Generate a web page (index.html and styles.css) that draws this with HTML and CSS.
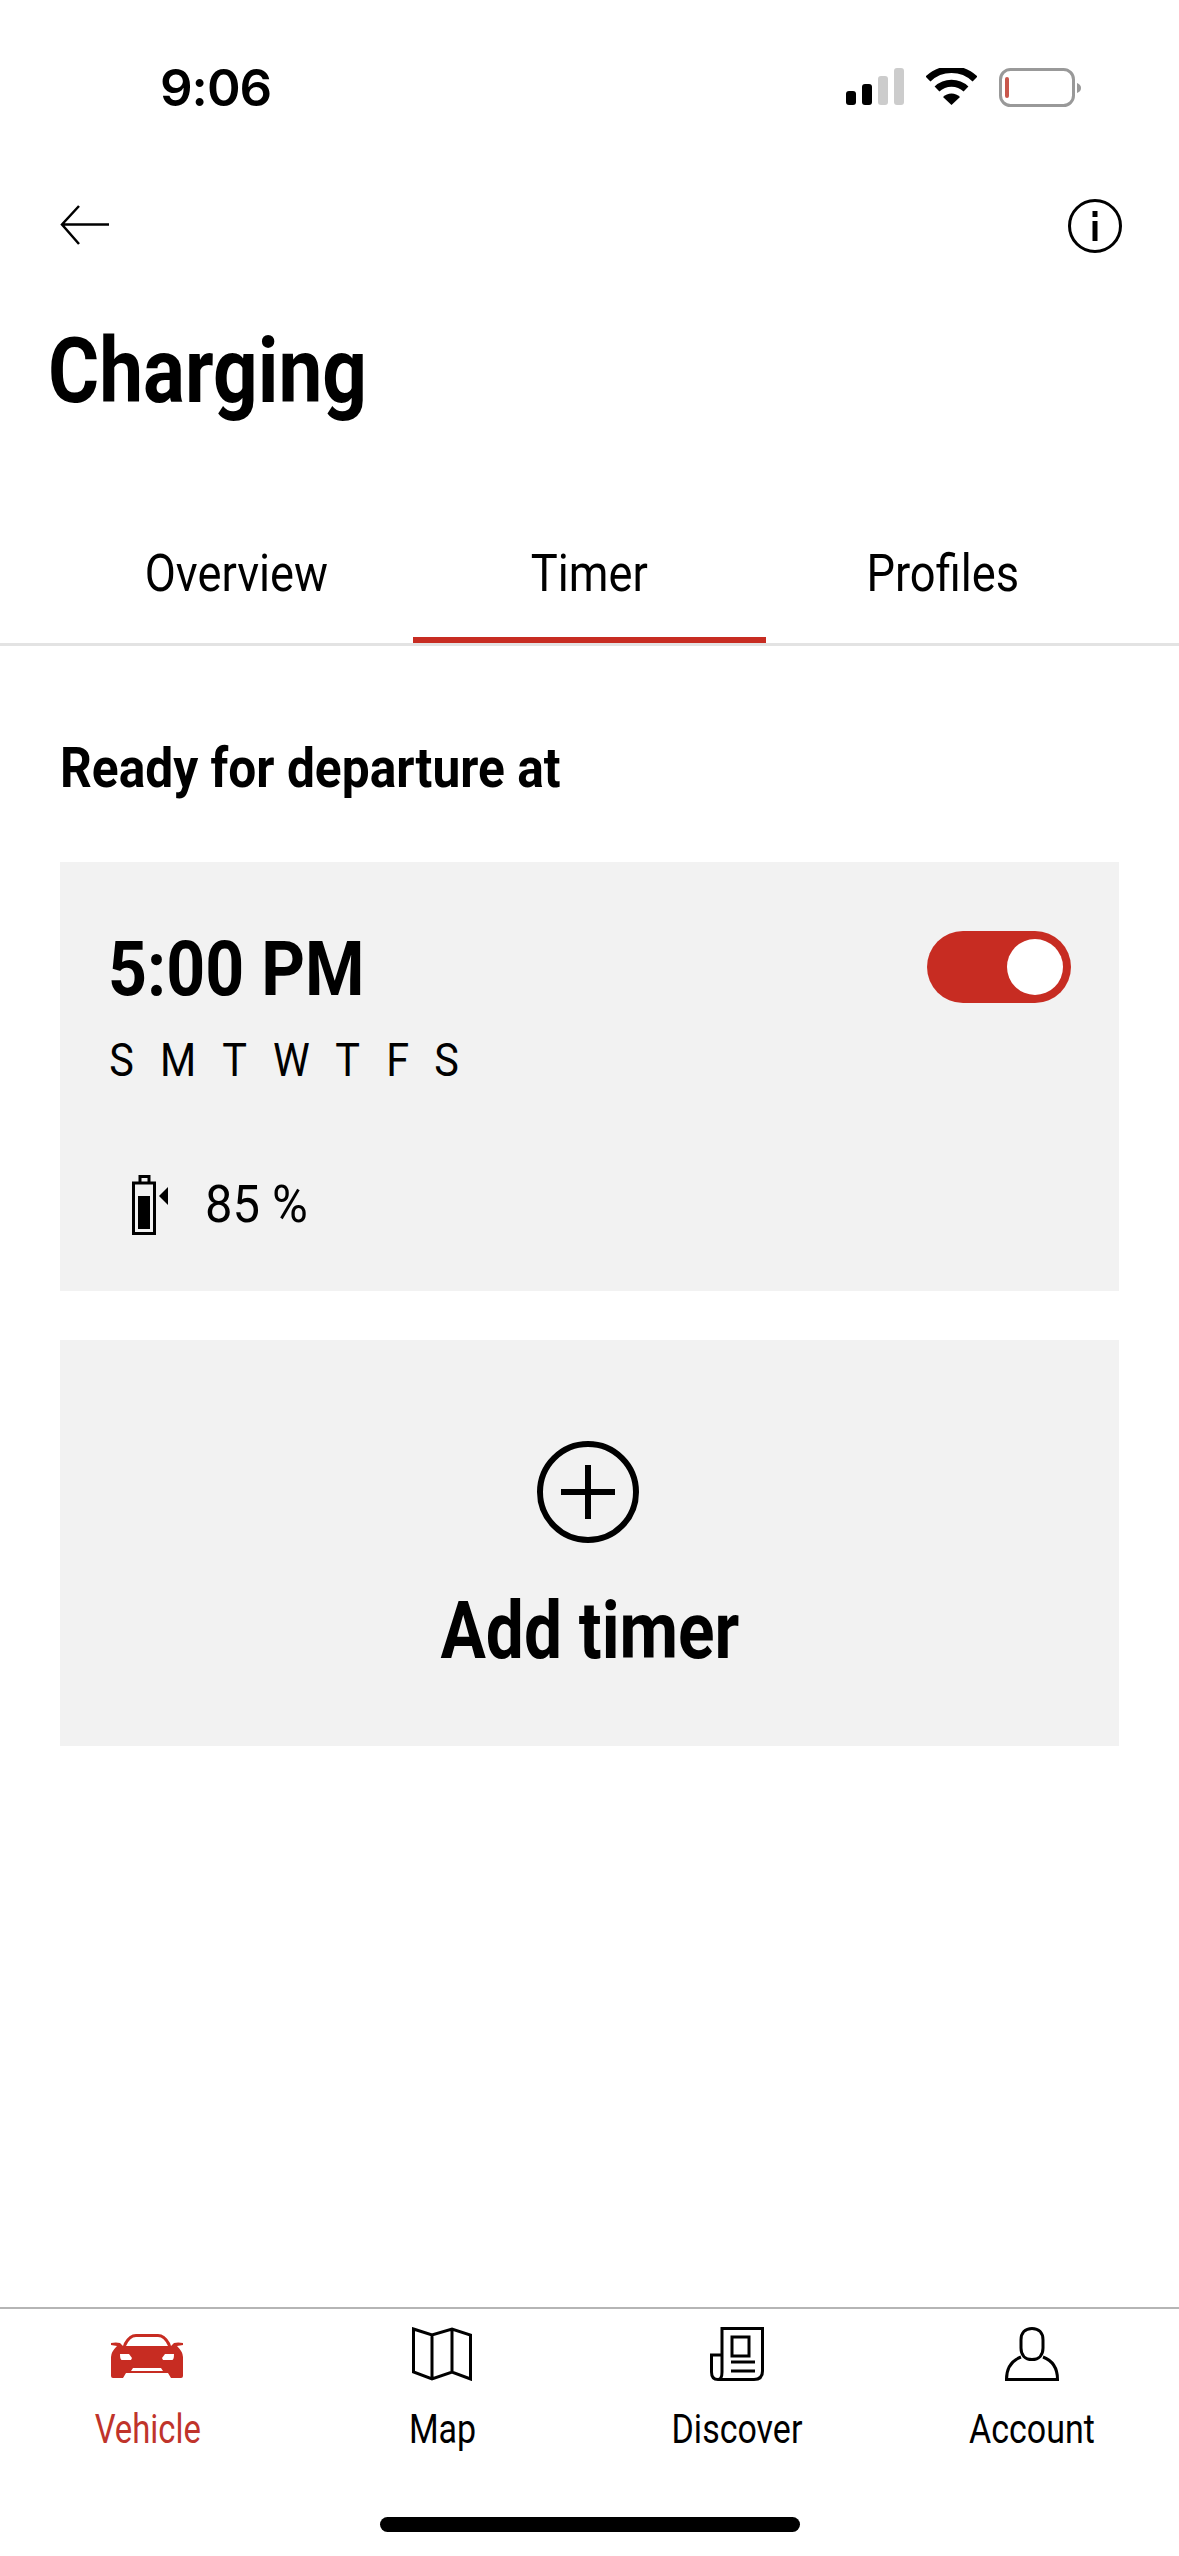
FILE: index.html
```html
<!DOCTYPE html>
<html lang="en">

<head>
    <meta charset="UTF-8">
    <meta name="viewport" content="width=device-width, initial-scale=1.0">
    <title>Charging</title>
    <link rel="stylesheet" href="styles.css">
</head>

<body>
    <div class="page">
        <div class="status-bar">
            <span class="clock">9:06</span>
            <div class="status-icons">
                <svg class="signal" width="58" height="37" viewBox="0 0 58 37">
                    <rect x="0" y="23" width="10" height="14" rx="3" fill="#000"/>
                    <rect x="16" y="16" width="10" height="21" rx="3" fill="#000"/>
                    <rect x="32" y="8" width="10" height="29" rx="3" fill="#ccc"/>
                    <rect x="48" y="0" width="10" height="37" rx="3" fill="#ccc"/>
                </svg>
                <svg class="wifi" width="51" height="37" viewBox="0 0 51 37">
                    <path d="M2 11 A34 34 0 0 1 49 11" fill="none" stroke="#000" stroke-width="7"/>
                    <path d="M11 21 A21 21 0 0 1 40 21" fill="none" stroke="#000" stroke-width="7"/>
                    <path d="M25.500 37 L17 29 A12 12 0 0 1 34 29 Z" fill="#000"/>
                </svg>
                <svg class="batt" width="82" height="39" viewBox="0 0 82 39">
                    <rect x="1.500" y="1.500" width="73" height="36" rx="10" fill="none" stroke="#999" stroke-width="3"/>
                    <rect x="6" y="9" width="4" height="21" rx="2" fill="#c8574c"/>
                    <path d="M78 15 C81 16 82 18 82 20 C82 22 81 24 78 25 Z" fill="#999"/>
                </svg>
            </div>
        </div>

        <div class="top-bar">
            <svg width="50" height="40" viewBox="0 0 50 40">
                <path d="M49 19.500 H3 M19 1 L2 19.500 L19 39" fill="none" stroke="#000" stroke-width="2.500"/>
            </svg>
            <svg width="54" height="54" viewBox="0 0 54 54">
                <circle cx="27" cy="27" r="25.500" fill="none" stroke="#000" stroke-width="3"/>
                <rect x="24.500" y="12" width="5" height="6" fill="#000"/>
                <rect x="24.500" y="22" width="5" height="20" fill="#000"/>
            </svg>
        </div>

        <h1 class="title"><span class="narrow">Charging</span></h1>

        <div class="tabs">
            <div class="tab"><span class="narrow">Overview</span></div>
            <div class="tab active"><span class="narrow">Timer</span></div>
            <div class="tab"><span class="narrow">Profiles</span></div>
        </div>

        <div class="content">
            <h2 class="section-title"><span class="narrow">Ready for departure at</span></h2>

            <div class="card timer-card">
                <div class="timer-top">
                    <div class="time"><span class="narrow">5:00 PM</span></div>
                    <div class="toggle"><span class="knob"></span></div>
                </div>
                <div class="days">
                    <span class="narrow">S</span><span class="narrow">M</span><span class="narrow">T</span><span class="narrow">W</span><span class="narrow">T</span><span class="narrow">F</span><span class="narrow">S</span>
                </div>
                <div class="target">
                    <svg width="36" height="60" viewBox="0 0 36 60">
                        <path d="M8 8 V1.500 H17 V8" fill="none" stroke="#000" stroke-width="3"/>
                        <rect x="1.500" y="8" width="21" height="50.500" fill="none" stroke="#000" stroke-width="3"/>
                        <rect x="6" y="21" width="12" height="33" fill="#000"/>
                        <path d="M27 21 L36 12 V30 Z" fill="#000"/>
                    </svg>
                    <span class="percent narrow">85 %</span>
                </div>
            </div>

            <div class="card add-card">
                <svg class="plus" width="102" height="102" viewBox="0 0 102 102">
                    <circle cx="51" cy="51" r="48" fill="none" stroke="#000" stroke-width="6"/>
                    <path d="M51 24 V78 M24 51 H78" fill="none" stroke="#000" stroke-width="6"/>
                </svg>
                <div class="add-label"><span class="narrow">Add timer</span></div>
            </div>
        </div>

        <nav class="bottom-nav">
            <div class="nav-item selected">
                <svg width="72" height="54" viewBox="0 -6 72 54">
                    <path fill-rule="evenodd" fill="#c72c22" d="M12 13 L13 10 Q18 1 25 1 H47 Q54 1 59 10 L60 13 L63 10 Q67 9 72 10 V12 L66 13 Q72 19 72 24 V43 Q72 45 70 45 H60 L57 40 H15 L12 45 H2 Q0 45 0 43 V24 Q0 19 6 13 L0 12 V10 Q5 9 9 10 Z M15 13 H57 Q53 4 47 4 H25 Q19 4 15 13 Z M9 21 Q9 27 11 27 H20 L21 25 L18 21 Z M63 21 H54 L51 25 L52 27 H61 Q63 27 63 21 Z M22 35 H50 L52 38 H20 Z"/>
                </svg>
                <span class="nav-label"><span class="narrow">Vehicle</span></span>
            </div>
            <div class="nav-item">
                <svg width="60" height="54" viewBox="0 0 60 54">
                    <path d="M1.500 2 L20 8 L40 2 L58.500 8 V52 L40 45 L20 52 L1.500 45 Z M20 8 V52 M40 2 V45" fill="none" stroke="#000" stroke-width="3"/>
                </svg>
                <span class="nav-label"><span class="narrow">Map</span></span>
            </div>
            <div class="nav-item">
                <svg width="54" height="54" viewBox="0 0 54 54">
                    <path d="M12 28 V1.500 H52.500 V44 Q52.500 52.500 44 52.500 H9 M12 28 H1.500 V45 Q1.500 52.500 8 52.500 Q12 52.500 12 45 V28" fill="none" stroke="#000" stroke-width="3"/>
                    <rect x="22" y="10" width="17" height="19" fill="none" stroke="#000" stroke-width="3"/>
                    <path d="M21 35 H45 M21 44 H45" fill="none" stroke="#000" stroke-width="3"/>
                </svg>
                <span class="nav-label"><span class="narrow">Discover</span></span>
            </div>
            <div class="nav-item">
                <svg width="54" height="54" viewBox="0 0 54 54">
                    <path d="M27 1.500 C20 1.500 16 6 16 13 V21 C16 28 20 32.500 27 32.500 C34 32.500 38 28 38 21 V13 C38 6 34 1.500 27 1.500 Z" fill="none" stroke="#000" stroke-width="3"/>
                    <path d="M16 30 C8 33 1.500 40 1.500 52.500 H52.500 C52.500 40 46 33 38 30" fill="none" stroke="#000" stroke-width="3"/>
                </svg>
                <span class="nav-label"><span class="narrow">Account</span></span>
            </div>
        </nav>

        <div class="home-row"><span class="home-bar"></span></div>
    </div>
</body>

</html>
```

FILE: styles.css
```css
* {
    box-sizing: border-box;
}

body {
    margin: 0;
    background-color: #fff;
    color: #000;
    font-family: Roboto, "Liberation Sans", sans-serif;
}

.page {
    width: 1179px;
    height: 2556px;
    display: flex;
    flex-direction: column;
    overflow: hidden;
}

/* no condensed family installed, so squeeze the text sideways */
.narrow {
    display: inline-block;
    transform: scaleX(var(--squeeze, 0.9));
    transform-origin: center;
}

.status-bar {
    height: 199px;
    padding: 68px 98px 0 160px;
    display: flex;
    justify-content: space-between;
    align-items: flex-start;
}

.clock {
    font-family: Inter, sans-serif;
    font-size: 51px;
    font-weight: 600;
    line-height: 40px;
    letter-spacing: -1px;
}

.status-icons {
    display: flex;
    align-items: flex-start;
    gap: 22px;
}

.top-bar {
    height: 54px;
    padding: 6px 57px 0 60px;
    display: flex;
    justify-content: space-between;
    align-items: flex-start;
}

.top-bar svg:last-child {
    margin-top: -6px;
}

.title {
    --squeeze: 0.87;
    margin: 69px 0 0 48px;
    font-size: 90px;
    font-weight: 700;
    line-height: 100px;
}

.title .narrow,
.section-title .narrow,
.time .narrow,
.percent.narrow {
    transform-origin: left;
}

.tabs {
    --squeeze: 0.87;
    margin-top: 106px;
    height: 118px;
    padding: 0 60px;
    display: flex;
    border-bottom: 3px solid #e3e3e3;
}

.tab {
    flex: 1;
    height: 115px;
    padding-top: 16px;
    font-size: 52px;
    line-height: 60px;
    text-align: center;
}

.tab.active {
    border-bottom: 6px solid #c72c22;
}

.content {
    padding: 0 60px;
}

.section-title {
    --squeeze: 0.887;
    margin: 92px 0 0;
    font-size: 56px;
    font-weight: 700;
    line-height: 60px;
}

.card {
    background-color: #f2f2f2;
}

.timer-card {
    margin-top: 64px;
    height: 429px;
    padding: 69px 48px 0 48px;
}

.timer-top {
    display: flex;
    justify-content: space-between;
    align-items: flex-start;
}

.time {
    --squeeze: 0.895;
    font-size: 76px;
    font-weight: 700;
    line-height: 76px;
}

.toggle {
    width: 144px;
    height: 72px;
    padding: 8px;
    display: flex;
    justify-content: flex-end;
    background-color: #c72c22;
    border-radius: 36px;
}

.knob {
    width: 56px;
    height: 56px;
    background-color: #fff;
    border-radius: 50%;
}

.days {
    --squeeze: 0.9;
    margin-top: 28px;
    width: 352px;
    display: flex;
    justify-content: space-between;
    font-size: 46px;
    line-height: 50px;
}

.target {
    margin: 90px 0 0 24px;
    display: flex;
    align-items: center;
    gap: 37px;
}

.percent {
    --squeeze: 0.94;
    font-size: 52px;
    line-height: 60px;
}

.add-card {
    margin-top: 49px;
    height: 406px;
    padding-top: 101px;
    display: flex;
    flex-direction: column;
    align-items: center;
}

.plus {
    margin-right: 4px;
}

.add-label {
    --squeeze: 0.845;
    margin-top: 43px;
    font-size: 80px;
    font-weight: 700;
    line-height: 90px;
}

.bottom-nav {
    --squeeze: 0.85;
    margin-top: auto;
    height: 210px;
    padding-top: 18px;
    display: flex;
    border-top: 2px solid #b5b5b5;
}

.nav-item {
    flex: 1;
    display: flex;
    flex-direction: column;
    align-items: center;
}

.nav-label {
    margin-top: 26px;
    font-size: 40px;
    line-height: 46px;
}

.selected .nav-label {
    --squeeze: 0.82;
    color: #c0342b;
}

.home-row {
    height: 39px;
    display: flex;
    justify-content: center;
}

.home-bar {
    width: 420px;
    height: 15px;
    background-color: #000;
    border-radius: 8px;
}
```
